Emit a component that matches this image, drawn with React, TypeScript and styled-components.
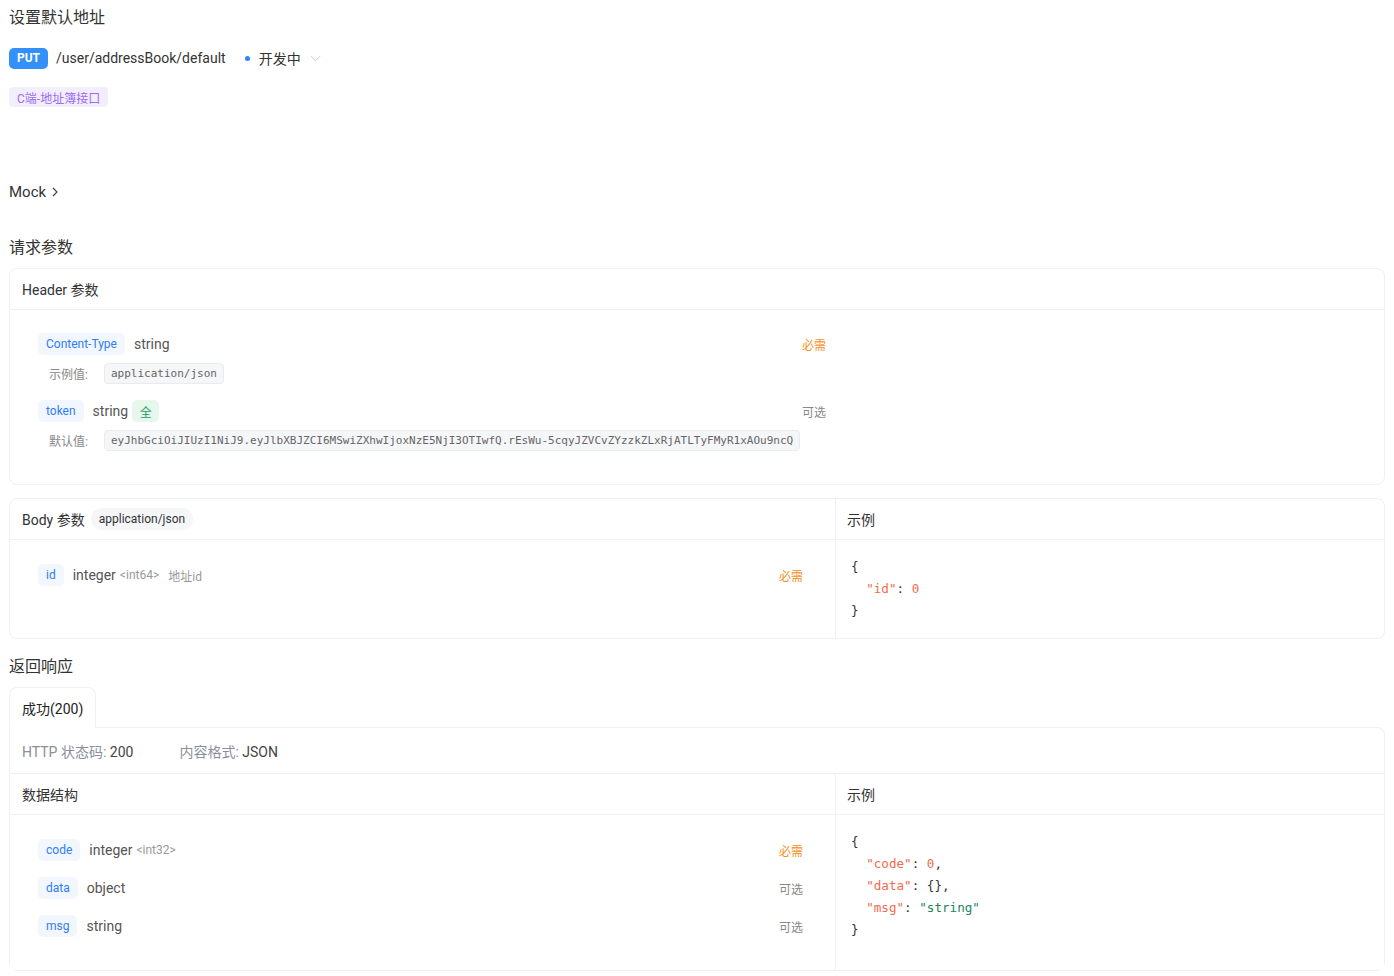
import React from 'react';
import styled, { createGlobalStyle } from 'styled-components';

const GlobalStyle = createGlobalStyle`
  html, body { margin: 0; padding: 0; background: #fff; }
  body {
    font-family: 'Segoe UI', Roboto, 'Noto Sans CJK SC', sans-serif;
    color: #333;
  }
  * { box-sizing: border-box; }
`;

const MONO = `'DejaVu Sans Mono', 'Liberation Mono', monospace`;

const Page = styled.div`
  width: 1376px;
  margin: 0 9px;
  padding-bottom: 6px;
`;

const Title = styled.div`
  font-size: 16px;
  line-height: 36px;
  color: #333;
`;

const MetaRow = styled.div`
  display: flex;
  align-items: center;
  height: 22px;
  margin-top: 11px;
`;

const MethodBadge = styled.span`
  display: inline-flex;
  align-items: center;
  justify-content: center;
  width: 39px;
  height: 21px;
  border-radius: 5px;
  background: #3390f8;
  color: #fff;
  font-size: 12px;
  font-weight: 700;
`;

const PathText = styled.span`
  margin-left: 8px;
  font-size: 14px;
  color: #333;
`;

const Status = styled.span`
  display: inline-flex;
  align-items: center;
  margin-left: 19px;
  font-size: 14px;
  color: #333;
  &::before {
    content: '';
    width: 5px;
    height: 5px;
    border-radius: 50%;
    background: #2f86f6;
    margin-right: 9px;
  }
`;

const Caret = styled.svg`
  margin-left: 9px;
  width: 11px;
  height: 11px;
`;

const ModuleTag = styled.span`
  display: inline-flex;
  align-items: center;
  height: 20px;
  margin-top: 18px;
  padding: 0 8px;
  border-radius: 4px;
  background: #f3eefe;
  color: #9b6cf0;
  font-size: 12px;
`;

const MockLink = styled.div`
  display: flex;
  align-items: center;
  gap: 4px;
  margin-top: 73px;
  font-size: 15px;
  line-height: 24px;
  color: #333;
`;

const SectionTitle = styled.div<{ gap: number }>`
  margin-top: ${({ gap }) => gap}px;
  font-size: 16px;
  line-height: 24px;
  color: #333;
`;

const Card = styled.div<{ square?: boolean }>`
  margin-top: ${({ square }) => (square ? 0 : 8)}px;
  border: 1px solid #eef0f3;
  border-radius: ${({ square }) => (square ? '0 8px 8px 8px' : '8px')};
  background: #fff;
`;

const SplitCard = styled(Card)<{ flat?: boolean }>`
  display: grid;
  grid-template-columns: 825px 1fr;
  ${({ flat }) => (flat ? 'margin-top: 0; border: none; border-radius: 0;' : 'margin-top: 13px;')}
`;

const CardHead = styled.div`
  display: flex;
  align-items: center;
  gap: 6px;
  height: 41px;
  padding: 0 12px;
  border-bottom: 1px solid #eef0f3;
  font-size: 14px;
  color: #333;
`;

const Pane = styled.div<{ divider?: boolean }>`
  display: flex;
  flex-direction: column;
  min-width: 0;
  ${({ divider }) => (divider ? 'border-left: 1px solid #eef0f3;' : '')}
`;

const PaneHead = styled(CardHead)<{ pad?: number }>`
  padding-left: ${({ pad }) => pad ?? 12}px;
`;

const MediaTag = styled.span`
  display: inline-flex;
  align-items: center;
  height: 22px;
  padding: 0 8px;
  border-radius: 11px;
  background: #f5f6f8;
  font-size: 12px;
  color: #333;
`;

const ParamList = styled.div<{ width?: number; top: number; bottom: number; right?: number }>`
  display: flex;
  flex-direction: column;
  gap: 16px;
  padding: ${({ top, bottom, right }) => `${top}px ${right ?? 28}px ${bottom}px 28px`};
  ${({ width }) => (width ? `width: ${width + 56}px;` : '')}
`;

const Param = styled.div`
  display: flex;
  flex-direction: column;
  gap: 8px;
`;

const ParamLine = styled.div`
  display: flex;
  align-items: center;
  height: 22px;
`;

const NameTag = styled.span`
  display: inline-flex;
  align-items: center;
  height: 22px;
  padding: 0 8px;
  border-radius: 5px;
  background: #f2f7ff;
  color: #2f7cf6;
  font-size: 12px;
`;

const TypeText = styled.span`
  margin-left: 9px;
  font-size: 14px;
  color: #555;
`;

const FormatText = styled.span`
  margin-left: 4px;
  font-size: 12px;
  color: #999;
`;

const DescText = styled.span`
  margin-left: 9px;
  font-size: 12px;
  color: #999;
`;

const AllBadge = styled.span`
  display: inline-flex;
  align-items: center;
  justify-content: center;
  width: 27px;
  height: 22px;
  margin-left: 4px;
  border-radius: 5px;
  background: #e8f7ee;
  color: #22a35a;
  font-size: 12px;
`;

const Need = styled.span<{ required: boolean }>`
  margin-left: auto;
  font-size: 12px;
  color: ${({ required }) => (required ? '#f5901f' : '#888')};
`;

const ValueLine = styled.div`
  display: flex;
  align-items: center;
  height: 21px;
  padding-left: 11px;
`;

const ValueLabel = styled.span`
  width: 55px;
  font-size: 12px;
  color: #888;
`;

const CodeBox = styled.span`
  display: inline-flex;
  align-items: center;
  height: 21px;
  padding: 0 6px;
  border: 1px solid #e9ebef;
  border-radius: 4px;
  background: #f5f6f8;
  font-family: ${MONO};
  font-size: 11px;
  color: #666;
`;

const Json = styled.pre<{ top: number }>`
  margin: 0;
  padding: ${({ top }) => top}px 15px 16px;
  font-family: ${MONO};
  font-size: 12.6px;
  line-height: 22px;
  color: #333;
`;

const Key = styled.span`
  color: #f26b4d;
`;

const Str = styled.span`
  color: #23845a;
`;

const TabBar = styled.div`
  display: flex;
  margin-top: 8px;
  margin-bottom: -1px;
  position: relative;
`;

const Tab = styled.div`
  display: flex;
  align-items: center;
  height: 41px;
  padding: 0 12px;
  border: 1px solid #eef0f3;
  border-bottom: 1px solid #fff;
  border-radius: 8px 8px 0 0;
  background: #fff;
  font-size: 14px;
  color: #222;
`;

const StatusRow = styled.div`
  display: flex;
  align-items: center;
  gap: 46px;
  height: 46px;
  padding: 0 12px;
  border-bottom: 1px solid #eef0f3;
  font-size: 14px;
`;

const StatusItem = styled.span`
  color: #8a8f98;
  b {
    font-weight: 400;
    color: #444;
  }
`;

type P = {
  name: string;
  type: string;
  format?: string;
  desc?: string;
  all?: boolean;
  required: boolean;
  valueLabel?: string;
  value?: string;
};

const ParamItem = ({ p }: { p: P }) => (
  <Param>
    <ParamLine>
      <NameTag>{p.name}</NameTag>
      <TypeText>{p.type}</TypeText>
      {p.format && <FormatText>&lt;{p.format}&gt;</FormatText>}
      {p.desc && <DescText>{p.desc}</DescText>}
      {p.all && <AllBadge>全</AllBadge>}
      <Need required={p.required}>{p.required ? '必需' : '可选'}</Need>
    </ParamLine>
    {p.value && (
      <ValueLine>
        <ValueLabel>{p.valueLabel}:</ValueLabel>
        <CodeBox>{p.value}</CodeBox>
      </ValueLine>
    )}
  </Param>
);

const headerParams: P[] = [
  { name: 'Content-Type', type: 'string', required: true, valueLabel: '示例值', value: 'application/json' },
  {
    name: 'token',
    type: 'string',
    all: true,
    required: false,
    valueLabel: '默认值',
    value:
      'eyJhbGciOiJIUzI1NiJ9.eyJlbXBJZCI6MSwiZXhwIjoxNzE5NjI3OTIwfQ.rEsWu-5cqyJZVCvZYzzkZLxRjATLTyFMyR1xAOu9ncQ',
  },
];

const responseParams: P[] = [
  { name: 'code', type: 'integer', format: 'int32', required: true },
  { name: 'data', type: 'object', required: false },
  { name: 'msg', type: 'string', required: false },
];

export default function App() {
  return (
    <Page>
      <GlobalStyle />
      <Title>设置默认地址</Title>
      <MetaRow>
        <MethodBadge>PUT</MethodBadge>
        <PathText>/user/addressBook/default</PathText>
        <Status>开发中</Status>
        <Caret viewBox="0 0 12 12" fill="none" stroke="#c4c7cc" strokeWidth="1">
          <path d="M1 3.5 L6 8.5 L11 3.5" />
        </Caret>
      </MetaRow>
      <ModuleTag>C端-地址簿接口</ModuleTag>

      <MockLink>
        Mock
        <svg width="10" height="12" viewBox="0 0 10 12" fill="none" stroke="#444" strokeWidth="1.2">
          <path d="M3 2 L7 6 L3 10" />
        </svg>
      </MockLink>

      <SectionTitle gap={32}>请求参数</SectionTitle>
      <Card>
        <CardHead>Header 参数</CardHead>
        <ParamList width={788} top={23} bottom={33}>
          {headerParams.map(p => (
            <ParamItem key={p.name} p={p} />
          ))}
        </ParamList>
      </Card>

      <SplitCard>
        <Pane>
          <CardHead>
            Body 参数<MediaTag>application/json</MediaTag>
          </CardHead>
          <ParamList top={24} bottom={52} right={32}>
            <ParamItem p={{ name: 'id', type: 'integer', format: 'int64', desc: '地址id', required: true }} />
          </ParamList>
        </Pane>
        <Pane divider>
          <PaneHead pad={11}>示例</PaneHead>
          <Json top={16}>
            {'{\n  '}
            <Key>"id"</Key>: <Key>0</Key>
            {'\n}'}
          </Json>
        </Pane>
      </SplitCard>

      <SectionTitle gap={16}>返回响应</SectionTitle>
      <TabBar>
        <Tab>成功(200)</Tab>
      </TabBar>
      <Card square>
        <StatusRow>
          <StatusItem>
            HTTP 状态码: <b>200</b>
          </StatusItem>
          <StatusItem>
            内容格式: <b>JSON</b>
          </StatusItem>
        </StatusRow>
        <SplitCard flat>
          <Pane>
            <CardHead>数据结构</CardHead>
            <ParamList top={24} bottom={33} right={32}>
              {responseParams.map(p => (
                <ParamItem key={p.name} p={p} />
              ))}
            </ParamList>
          </Pane>
          <Pane divider>
            <PaneHead pad={11}>示例</PaneHead>
            <Json top={16}>
              {'{\n  '}
              <Key>"code"</Key>: <Key>0</Key>,{'\n  '}
              <Key>"data"</Key>: {'{}'},{'\n  '}
              <Key>"msg"</Key>: <Str>"string"</Str>
              {'\n}'}
            </Json>
          </Pane>
        </SplitCard>
      </Card>
    </Page>
  );
}
